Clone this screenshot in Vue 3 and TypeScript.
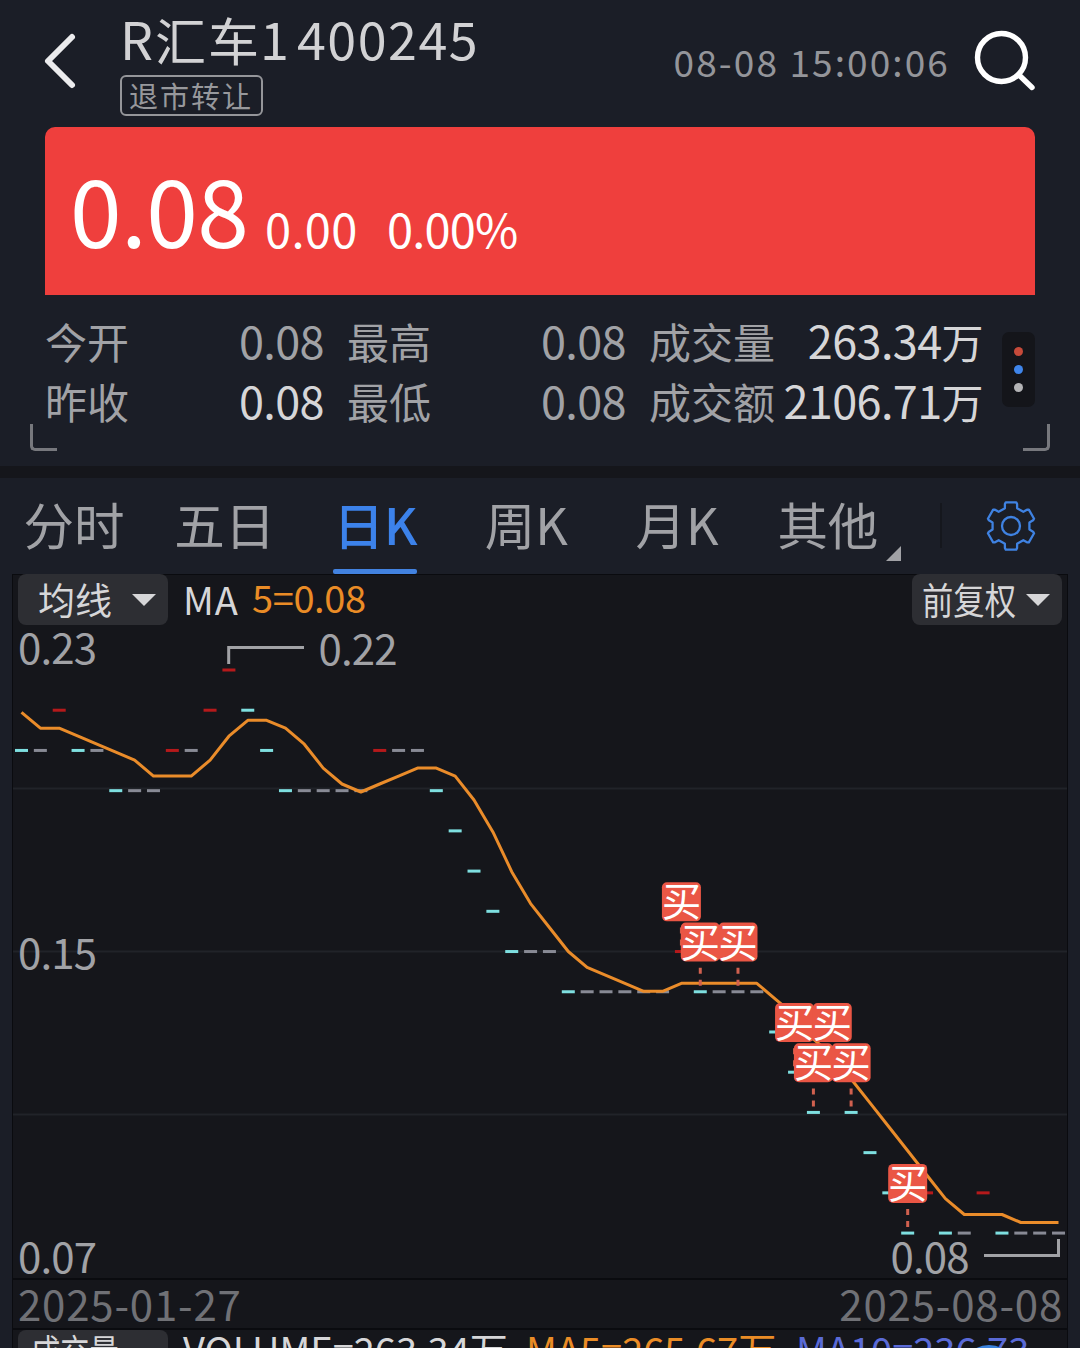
<script setup lang="ts">
type Trend = 'up' | 'down' | 'flat'

interface Bar {
  x: number
  y: number
  trend: Trend
}

interface Quote {
  label: string
  value: string
  unit?: string
  bright?: boolean
}

const quotes: Quote[] = [
  { label: '今开', value: '0.08' },
  { label: '最高', value: '0.08' },
  { label: '成交量', value: '263.34', unit: '万', bright: true },
  { label: '昨收', value: '0.08', bright: true },
  { label: '最低', value: '0.08' },
  { label: '成交额', value: '2106.71', unit: '万', bright: true },
]

const tabs = ['分时', '五日', '日K', '周K', '月K', '其他']
const activeTab = '日K'

// Daily closes in cents
const closes: number[] = [
  20, 20, 21, 20, 20, 19, 19, 19, 20, 20, 21, 22, 21, 20, 19, 19, 19, 19, 19,
  20, 20, 20, 19, 18, 17, 16, 15, 15, 15, 14, 14, 14, 14, 14, 14, 15, 14, 14,
  14, 14, 13, 12, 11, 12, 11, 10, 9, 8, 9, 8, 8, 9, 8, 8, 8, 8,
]
// Averages whose window starts before the first visible day
const leadingAverages = [21, 20.6, 20.6, 20.4]
const buyDays = [35, 36, 38, 41, 43, 42, 44, 47]

const dayX = (i: number): number => 21.5 + i * 18.855
const priceY = (p: number): number => 670 + (22 - p) * 40.22

const bars: Bar[] = closes.map((p, i) => {
  const prev = i === 0 ? 21 : closes[i - 1]
  const trend: Trend = p > prev ? 'up' : p < prev ? 'down' : 'flat'
  return { x: dayX(i), y: priceY(p), trend }
})

const averageLine = closes
  .map((_, i) => {
    const avg =
      i < 4 ? leadingAverages[i] : closes.slice(i - 4, i + 1).reduce((a, b) => a + b, 0) / 5
    return `${dayX(i).toFixed(1)},${(1222.5 - (avg - 8.2) * 39.86).toFixed(1)}`
  })
  .join(' ')

const buys = buyDays.map((i) => ({ x: dayX(i), y: priceY(closes[i]) }))

const gearPoints = Array.from({ length: 6 }, (_, i) => i * 60)
  .flatMap((base) =>
    [
      [-22, 18.6],
      [-19, 18.8],
      [-15.5, 22.8],
      [-12.5, 24.2],
      [12.5, 24.2],
      [15.5, 22.8],
      [19, 18.8],
      [22, 18.6],
    ].map(([offset, r]) => {
      const a = ((base + offset) * Math.PI) / 180
      return `${(26 + r * Math.sin(a)).toFixed(2)},${(26 - r * Math.cos(a)).toFixed(2)}`
    }),
  )
  .join(' ')
</script>

<template>
  <main class="app">
    <header class="header">
      <svg class="back" width="36" height="60" viewBox="0 0 36 60">
        <path d="M30 6 L6 30 L30 54" />
      </svg>
      <div class="identity">
        <h1 class="name">
          <span class="letter">R</span><span class="name-cn">汇车</span><span class="digit">1</span>
          <span class="code">400245</span>
        </h1>
        <span class="status">退市转让</span>
      </div>
      <time class="time">08-08 15:00:06</time>
      <svg class="search" width="64" height="64" viewBox="0 0 64 64">
        <circle cx="29.5" cy="29.5" r="24" />
        <path d="M46.5 46.5 L60 59.5" />
      </svg>
    </header>

    <section class="price">
      <span class="last">0.08</span>
      <span class="change">0.00</span>
      <span class="percent">0.00%</span>
    </section>

    <section class="quotes">
      <dl class="quote-grid">
        <div v-for="q in quotes" :key="q.label" class="quote">
          <dt>{{ q.label }}</dt>
          <dd :class="{ bright: q.bright }">{{ q.value }}<small v-if="q.unit">{{ q.unit }}</small></dd>
        </div>
      </dl>
      <div class="more">
        <i class="dot red"></i>
        <i class="dot blue"></i>
        <i class="dot gray"></i>
      </div>
      <i class="corner left"></i>
      <i class="corner right"></i>
    </section>

    <nav class="tabs">
      <div v-for="t in tabs" :key="t" class="tab" :class="{ active: t === activeTab }">
        {{ t }}
        <svg v-if="t === '其他'" class="tab-mark" width="15" height="15" viewBox="0 0 15 15">
          <path d="M15 0 V15 H0 Z" />
        </svg>
      </div>
      <i class="separator"></i>
      <svg class="gear" width="52" height="52" viewBox="0 0 52 52">
        <polygon :points="gearPoints" />
        <circle cx="26" cy="26" r="9" />
      </svg>
    </nav>

    <section class="chart">
      <div class="chart-bar">
        <div class="chip">
          <span>均线</span>
          <svg width="24" height="12" viewBox="0 0 24 12"><path d="M0 0 H24 L12 12 Z" /></svg>
        </div>
        <span class="ma">MA</span>
        <span class="ma-value">5=0.08</span>
        <div class="chip adjust">
          <span class="condensed">前复权</span>
          <svg width="24" height="12" viewBox="0 0 24 12"><path d="M0 0 H24 L12 12 Z" /></svg>
        </div>
      </div>

      <svg class="plot" width="1054" height="653" viewBox="13 625 1054 653">
        <path class="grid" d="M13 788.5 H1067 M13 951.5 H1067 M13 1114.5 H1067" />
        <rect
          v-for="(b, i) in bars"
          :key="i"
          :class="b.trend"
          :x="b.x - 6.5"
          :y="b.y - 1.5"
          width="13"
          height="3"
        />
        <polyline class="average" :points="averageLine" />
        <g class="axis">
          <text x="18" y="664" textLength="79">0.23</text>
          <text x="18" y="969" textLength="79">0.15</text>
          <text x="18" y="1273" textLength="79">0.07</text>
          <text x="318.5" y="665" textLength="79">0.22</text>
          <text x="890.5" y="1273" textLength="79">0.08</text>
        </g>
        <path class="leader" d="M228.7 664 V647.5 H304 M984 1255.5 H1058.5 V1239" />
        <g v-for="(b, i) in buys" :key="'b' + i">
          <path class="stem" :d="`M${b.x} ${b.y - 24} v6 m0 6 v6`" />
          <rect class="buy" :x="b.x - 19.5" :y="b.y - 69.2" width="39" height="39" rx="5" />
          <text class="buy-text" :x="b.x" :y="b.y - 35.2">买</text>
        </g>
      </svg>

      <div class="dates">
        <span>2025-01-27</span>
        <span>2025-08-08</span>
      </div>

      <div class="volume">
        <div class="chip"><span class="volume-name">成交量</span></div>
        <span class="v-total">VOLUME=263.34万</span>
        <span class="v-ma5">MA5=265.67万</span>
        <span class="v-ma10">MA10=236.73</span>
        <i class="float-ring"></i>
      </div>
    </section>
  </main>
</template>

<style>
body {
  margin: 0;
  background: #1b1e27;
}
</style>

<style scoped>
.app {
  width: 1080px;
  height: 1348px;
  overflow: hidden;
  background: #1b1e27;
  color: #a1a2a6;
  font-family: 'Noto Sans CJK SC', sans-serif;
}
.app * {
  box-sizing: border-box;
}
span,
time,
dt,
dd {
  white-space: nowrap;
}
.header {
  display: flex;
  height: 127px;
  padding: 0 44px 0 42px;
}
.back {
  margin-top: 31px;
  fill: none;
  stroke: #ececee;
  stroke-width: 6;
  stroke-linecap: round;
  stroke-linejoin: round;
}
.identity {
  margin-left: 42px;
  width: 400px;
}
.name {
  display: flex;
  margin: 0;
  height: 75px;
  font-size: 52px;
  font-weight: 400;
  line-height: 76px;
  color: #d2d2d4;
}
.letter {
  width: 35px;
}
.name-cn {
  width: 105px;
  font-size: 51px;
  line-height: 78px;
  letter-spacing: 2px;
}
.digit {
  width: 37px;
}
.code {
  letter-spacing: 1.5px;
}
.status {
  display: block;
  width: 143px;
  height: 41px;
  border: 2px solid #95969a;
  border-radius: 6px;
  padding-left: 7px;
  font-size: 29px;
  line-height: 37px;
  letter-spacing: 2px;
  color: #97989c;
}
.time {
  margin: 31px 0 0 auto;
  font-size: 37px;
  line-height: 60px;
  letter-spacing: 2.1px;
  color: #94959a;
}
.search {
  margin: 28px 0 0 22px;
  fill: none;
  stroke: #fff;
  stroke-width: 5.4;
  stroke-linecap: round;
}
.price {
  display: flex;
  align-items: baseline;
  height: 168px;
  margin: 0 45px;
  padding-left: 25px;
  border-radius: 10px 10px 0 0;
  background: #ef3f3d;
  color: #fff;
  line-height: 162px;
}
.last {
  width: 195px;
  font-size: 93px;
  letter-spacing: -0.6px;
}
.change {
  width: 122px;
  font-size: 47px;
  letter-spacing: 0.3px;
}
.percent {
  font-size: 47px;
  letter-spacing: -0.8px;
}
.quotes {
  position: relative;
  display: flex;
  height: 183px;
  padding: 18px 45px 0;
  border-bottom: 12px solid #15161b;
}
.quote-grid {
  display: grid;
  flex: none;
  grid-template-columns: 279px 279px 334px;
  grid-auto-rows: 60px;
  column-gap: 23px;
  width: 939px;
  height: 120px;
  margin: 0;
}
.quote {
  display: flex;
  justify-content: space-between;
  font-size: 45px;
  line-height: 54px;
}
.quote dt {
  font-size: 42px;
  line-height: 56px;
}
.quote dd {
  margin: 0;
  letter-spacing: -0.6px;
}
.bright {
  color: #d6d6d8;
}
.quote small {
  font-size: 42px;
}
.more {
  display: flex;
  flex: none;
  flex-direction: column;
  align-items: center;
  justify-content: center;
  gap: 9px;
  width: 33px;
  height: 75px;
  margin: 19px 0 0 18px;
  border-radius: 7px;
  background: #14151a;
}
.dot {
  width: 9px;
  height: 9px;
  border-radius: 50%;
}
.red {
  background: #c64a3a;
}
.blue {
  background: #3f85ea;
}
.gray {
  background: #b4b4b6;
}
.corner {
  position: absolute;
  bottom: 15px;
  width: 27px;
  height: 27px;
  border-bottom: 3px solid #77787d;
}
.corner.left {
  left: 30px;
  border-left: 3px solid #77787d;
  border-bottom-left-radius: 5px;
}
.corner.right {
  right: 30px;
  border-right: 3px solid #77787d;
  border-bottom-right-radius: 5px;
}
.tabs {
  display: flex;
  height: 96px;
}
.tab {
  position: relative;
  width: 150.8px;
  padding-right: 3px;
  font-size: 50.5px;
  line-height: 91px;
  text-align: center;
}
.tab.active {
  color: #3c82ea;
  font-weight: 500;
}
.tab.active::after {
  content: '';
  position: absolute;
  left: 31px;
  bottom: 0;
  width: 84px;
  height: 5px;
  border-radius: 2px;
  background: #4282e0;
}
.tab-mark {
  position: absolute;
  left: 132px;
  top: 68px;
  fill: #a1a2a6;
}
.separator {
  width: 2px;
  height: 45px;
  margin: 25px 0 0 35px;
  background: #15171d;
}
.gear {
  margin: 22px 0 0 43px;
  fill: none;
  stroke: #3f82e2;
  stroke-width: 2.3;
  stroke-linejoin: round;
}
.chart {
  width: 1056px;
  height: 774px;
  margin-left: 12px;
  border: 1px solid #0a0b0f;
  border-bottom: 0;
  background: #15161b;
}
.chart-bar {
  display: flex;
  height: 51px;
  margin-top: -1px;
  padding: 0 5px;
  font-size: 38px;
}
.chip {
  display: flex;
  flex: none;
  align-items: center;
  width: 150px;
  height: 51px;
  padding-left: 20px;
  border-radius: 8px;
  background: #2d2e33;
  color: #d6d6d8;
  font-size: 37px;
  line-height: 47px;
}
.chip svg {
  margin-left: 20px;
  fill: #d6d6d8;
}
.adjust {
  margin-left: auto;
  padding-left: 10px;
}
.adjust svg {
  margin-left: 10px;
}
.condensed {
  width: 94px;
  transform: scaleX(0.847);
  transform-origin: left;
}
.ma {
  margin-left: 15px;
  width: 69px;
  color: #d6d6d8;
  line-height: 49px;
  letter-spacing: 1px;
}
.ma-value {
  color: #ea8c26;
  line-height: 45px;
  letter-spacing: -0.4px;
}
.plot {
  display: block;
}
.grid {
  stroke: #212329;
  stroke-width: 2;
}
.up {
  fill: #b5191b;
}
.down {
  fill: #7edfe0;
}
.flat {
  fill: #888a95;
}
.average {
  fill: none;
  stroke: #ea8c2a;
  stroke-width: 3;
  stroke-linejoin: round;
}
.axis text {
  font-size: 42px;
  fill: #a1a2a6;
}
.leader {
  fill: none;
  stroke: #a1a2a6;
  stroke-width: 3;
}
.stem {
  stroke: #d0604f;
  stroke-width: 3;
}
.buy {
  fill: #ea5645;
}
.buy-text {
  fill: #fff;
  font-size: 39.5px;
  text-anchor: middle;
}
.dates {
  display: flex;
  justify-content: space-between;
  height: 52px;
  padding: 0 4px 0 5px;
  border-top: 2px solid #0a0b0f;
  border-bottom: 2px solid #0a0b0f;
  font-size: 42px;
  line-height: 46px;
  letter-spacing: 0.8px;
  color: #707176;
}
.volume {
  position: relative;
  display: flex;
  height: 40px;
  padding-left: 5px;
  font-size: 38px;
  line-height: 38px;
}
.volume .chip {
  padding-left: 13px;
  align-items: flex-start;
  line-height: 42px;
}
.volume-name {
  transform: scaleX(0.79);
  transform-origin: left;
}
.v-total {
  width: 343px;
  margin-left: 15px;
  color: #d6d6d8;
}
.v-ma5 {
  width: 270px;
  color: #ea8c26;
}
.v-ma10 {
  color: #5a6ad6;
}
.float-ring {
  position: absolute;
  left: 949px;
  top: 15px;
  width: 54px;
  height: 54px;
  border: 4px solid #3b82dc;
  border-radius: 50%;
}
</style>
